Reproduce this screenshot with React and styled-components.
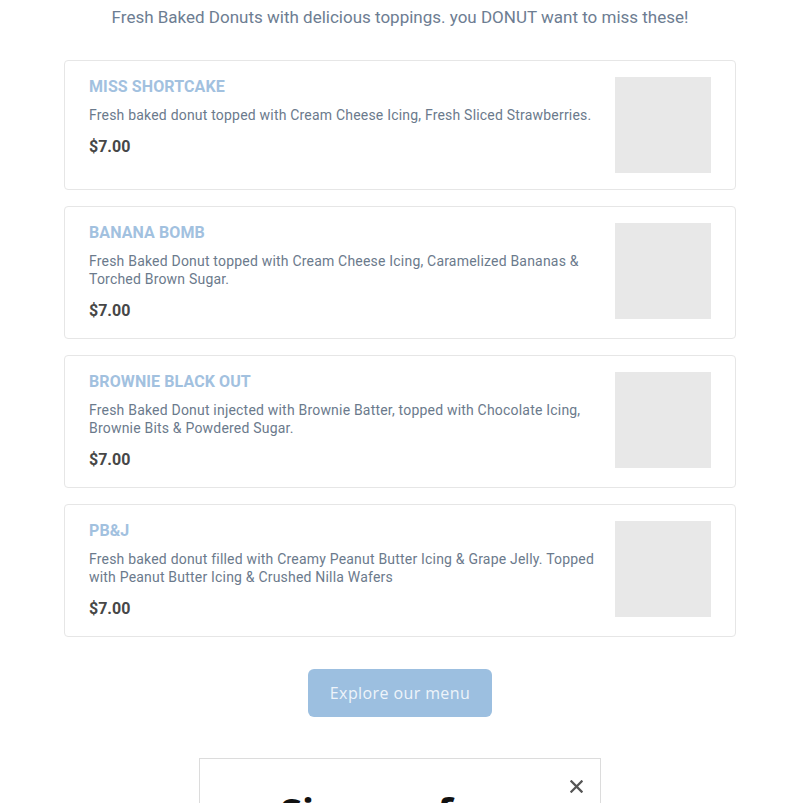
import React from "react";
import styled, { createGlobalStyle } from "styled-components";

const Global = createGlobalStyle`
  html, body { margin: 0; padding: 0; background: #ffffff; }
  body { font-family: Roboto, "Liberation Sans", Arial, sans-serif; overflow: hidden; }
  * { box-sizing: border-box; }
`;

const Page = styled.main`
  width: 800px;
  height: 803px;
  overflow: hidden;
  display: flex;
  flex-direction: column;
  align-items: center;
  & > * { flex-shrink: 0; }
`;

const Subtitle = styled.p`
  margin: 6px 0 0;
  font-size: 17px;
  line-height: 22px;
  color: #6d7d92;
  text-align: center;
`;

const List = styled.div`
  width: 672px;
  margin-top: 32px;
  display: flex;
  flex-direction: column;
  gap: 16px;
`;

const Card = styled.article`
  display: flex;
  align-items: flex-start;
  gap: 20px;
  padding: 16px 24px;
  border: 1px solid #e6e6e6;
  border-radius: 4px;
  background: #fff;
`;

const Info = styled.div`
  flex: 1;
  display: flex;
  flex-direction: column;
`;

const Title = styled.h3`
  margin: 0;
  padding-top: 2px;
  font-size: 16px;
  line-height: 16px;
  font-weight: 700;
  letter-spacing: 0.1px;
  color: #a2c1df;
  text-transform: uppercase;
`;

const Desc = styled.p`
  margin: 11px 0 0;
  font-size: 14px;
  line-height: 18px;
  letter-spacing: 0.2px;
  color: #6b7a8c;
`;

const Price = styled.div`
  margin-top: 12px;
  font-size: 16px;
  line-height: 22px;
  font-weight: 700;
  color: #474747;
`;

const Thumb = styled.div`
  width: 96px;
  height: 96px;
  flex: none;
  background: #e8e8e8;
`;

const Button = styled.button`
  margin-top: 32px;
  width: 184px;
  height: 48px;
  border: none;
  border-radius: 6px;
  background: #9cbfe0;
  color: #eef4fa;
  font-family: "Open Sans", "Liberation Sans", sans-serif;
  font-size: 16px;
  letter-spacing: 0.4px;
  cursor: pointer;
`;

const Dialog = styled.section`
  position: relative;
  margin-top: 41px;
  width: 402px;
  height: 200px;
  border: 1px solid #dcdcdc;
  background: #fff;
  padding: 29px 0 0 80px;
`;

const Close = styled.button`
  position: absolute;
  top: 17px;
  right: 14px;
  width: 20px;
  height: 20px;
  padding: 0;
  border: none;
  background: none;
  display: flex;
  align-items: center;
  justify-content: center;
  cursor: pointer;
`;

const Heading = styled.h2`
  margin: 0;
  font-family: "Noto Sans", "Liberation Sans", sans-serif;
  font-size: 40px;
  line-height: 48px;
  font-weight: 700;
  color: #111;
`;

const items = [
  {
    name: "Miss Shortcake",
    desc: "Fresh baked donut topped with Cream Cheese Icing, Fresh Sliced Strawberries.",
  },
  {
    name: "Banana Bomb",
    desc: "Fresh Baked Donut topped with Cream Cheese Icing, Caramelized Bananas & Torched Brown Sugar.",
  },
  {
    name: "Brownie Black Out",
    desc: "Fresh Baked Donut injected with Brownie Batter, topped with Chocolate Icing, Brownie Bits & Powdered Sugar.",
  },
  {
    name: "PB&J",
    desc: "Fresh baked donut filled with Creamy Peanut Butter Icing & Grape Jelly. Topped with Peanut Butter Icing & Crushed Nilla Wafers",
  },
];

export default function App() {
  return (
    <>
      <Global />
      <Page>
        <Subtitle>Fresh Baked Donuts with delicious toppings. you DONUT want to miss these!</Subtitle>
        <List>
          {items.map((it) => (
            <Card key={it.name}>
              <Info>
                <Title>{it.name}</Title>
                <Desc>{it.desc}</Desc>
                <Price>$7.00</Price>
              </Info>
              <Thumb />
            </Card>
          ))}
        </List>
        <Button>Explore our menu</Button>
        <Dialog>
          <Close aria-label="Close">
            <svg width="13" height="13" viewBox="0 0 14 14">
              <path d="M1.5 1.5 L12.5 12.5 M12.5 1.5 L1.5 12.5" stroke="#555" strokeWidth="2.4" strokeLinecap="square" />
            </svg>
          </Close>
          <Heading>Sign up for</Heading>
        </Dialog>
      </Page>
    </>
  );
}
